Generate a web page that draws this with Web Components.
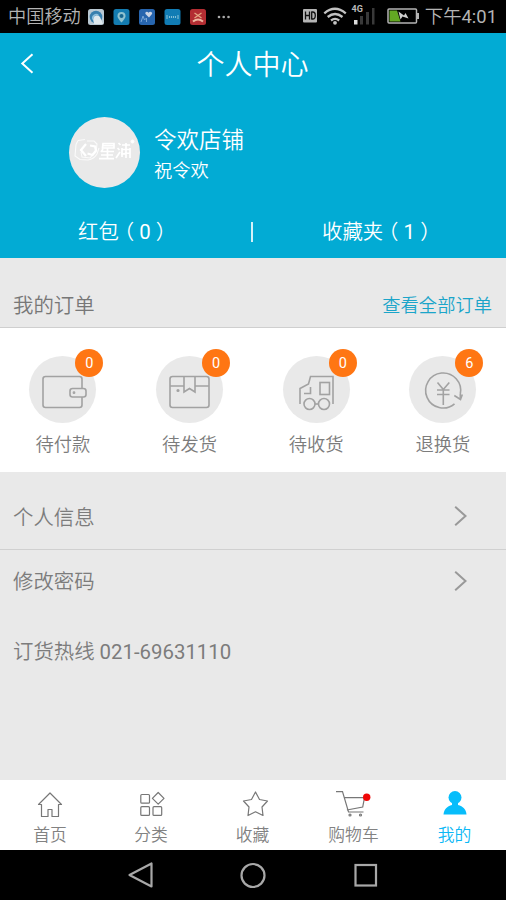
<!DOCTYPE html>
<html lang="zh-CN">
<head>
<meta charset="utf-8">
<title>个人中心</title>
<style>
html,body{margin:0;padding:0;background:#e9e9e9}
body{font-family:Roboto,"Noto Sans CJK SC",sans-serif;font-weight:350;width:506px;height:900px;overflow:hidden}
</style>
</head>
<body>
<profile-page></profile-page>
<script>
function define(name, html) {
  const t = document.createElement('template');
  t.innerHTML = '<style>*{box-sizing:border-box}svg{display:block;overflow:visible}.num{font-weight:400}</style>' + html;
  customElements.define(name, class extends HTMLElement {
    constructor() {
      super();
      this.attachShadow({mode: 'open'}).appendChild(t.content.cloneNode(true));
    }
  });
}

define('status-bar', `
<style>
:host{display:flex;align-items:center;justify-content:space-between;height:33px;padding:0 9px 0 8px;background:#000;color:#b4b4b4;font-size:18.2px;line-height:34px;white-space:nowrap}
.l,.r{display:flex;align-items:center;height:33px}
.l svg{margin-left:7px}
.t{font-size:18.400px}
</style>
<div class="l"><span>中国移动</span>
<svg width="144" height="16" viewBox="0 0 144 16">
 <rect width="16" height="16" rx="2.5" fill="#b9c8d2"/><circle cx="8" cy="8" r="6.3" fill="#377fae"/><path d="M5 10a3.8 3.8 0 0 1 7-2l3 7H6z" fill="#dfe8ec"/><path d="M5 10.500a3.500 3.500 0 0 1 5.500-4" stroke="#8fc0de" stroke-width="1.500" fill="none"/>
 <rect x="25.500" width="16" height="16" rx="2.500" fill="#147cb0"/><path d="M33.500 13.500C30 9.500 29.500 8.300 29.500 7a4 4 0 0 1 8 0c0 1.300-.5 2.500-4 6.500z" fill="#8fc3d0"/><circle cx="33.500" cy="7" r="2" fill="#17678f"/>
 <rect x="51" width="16" height="16" rx="2.500" fill="#2765ae"/><path d="M61 8.500L57.500 5c-1-2 1.800-3.200 3-1.300C61.800 1.800 65 3 64 5z" fill="#cbd4e5"/><path d="M53 13l2-6 1.500 4 2-2v4" stroke="#7aa6d6" fill="none"/>
 <rect x="76.500" width="16" height="16" rx="2.500" fill="#117cb4"/><path d="M79 6v4m2.500-3v2m2-2v2m2-2v2m2-2v2m2.500-3v4" stroke="#83bfd6" stroke-width="1.100"/>
 <rect x="102" width="16" height="16" rx="2.500" fill="#b32d32"/><path d="M106.500 4l7 5m0-5l-7 5" stroke="#e3a884" stroke-width="1.300"/><path d="M105 12.500q5-4 10 0" stroke="#efb6a0" stroke-width="2" fill="none"/>
 <g fill="#aaa"><circle cx="131" cy="8" r="1.300"/><circle cx="135.700" cy="8" r="1.300"/><circle cx="140.500" cy="8" r="1.300"/></g>
</svg></div>
<div class="r">
<svg width="122" height="33" viewBox="303 0 122 33">
 <rect x="303" y="9" width="14" height="13.500" rx="1" fill="#b4b4b4"/>
 <path d="M305.500 11.500v8M309.500 11.500v8M305.500 15.500h4M311.700 12v7M311.200 12h1.500q2.600 0 2.600 3.500t-2.600 3.500h-1.500" stroke="#111" stroke-width="1.300" fill="none"/>
 <g fill="none" stroke="#c2c2c2" stroke-width="2.300"><path d="M324.300 13.300q10.500-9 21.500 0"/><path d="M327.700 17q7.300-6 14.800 0"/><path d="M331 20.500q4-3.300 8.200 0"/></g><circle cx="335" cy="22.800" r="1.900" fill="#c2c2c2"/>
 <rect x="354" y="20" width="3.500" height="4.500" fill="#ddd"/><g fill="#393939"><rect x="360" y="16" width="3" height="8.500"/><rect x="366" y="12" width="3" height="12.500"/><rect x="372" y="8" width="2.500" height="16.500"/></g>
 <text x="351.500" y="11.500" font-size="9" font-weight="700" fill="#bbb">4G</text>
 <rect x="388" y="9" width="28.500" height="14" rx="1" stroke="#b4b4b4" stroke-width="1.500" fill="none"/><path d="M418 13v6" stroke="#b4b4b4" stroke-width="2"/>
 <path d="M389.500 10.500h7.500l3.500 11h-11z" fill="#63a823"/><path d="M398.500 11.500l5.500 4 1.500-2.500 3 5.500-6-2-2 3z" fill="#d0d0d0"/>
</svg><span class="t">下午<span class="num">4:01</span></span></div>`);

define('profile-header', `
<style>
:host{display:flex;flex-direction:column;height:225px;background:#02abd4;color:#fff}
.bar{display:grid;grid-template-columns:60px 1fr 60px;align-items:center;height:62px}
.bar svg{margin-left:21px}
.bar span{text-align:center;font-size:28px;line-height:40px;padding:3px 1px 0 0}
.who{display:flex;gap:14px;padding:22px 0 0 69px;height:114px}
.av{width:71px;height:71px;border-radius:50%;background:#e9e9e9}
.n{padding-top:7px}
.n b{display:block;font-weight:inherit;font-size:22.500px;line-height:32px}
.n i{display:block;font-style:normal;font-size:18.300px;line-height:30px}
.st{display:grid;grid-template-columns:251px 2px 1fr;height:46px;align-items:center;font-size:20.400px;line-height:30px}
.st u{width:1.500px;height:20px;background:#d4f1f8}
.a{padding-left:78px}.b{padding-left:69px}
.par{font-feature-settings:"halt";margin:0 5.100px}
</style>
<div class="bar"><svg width="13" height="20" viewBox="0 0 13 20"><path d="M11.500 .3L1.300 9.500l10.200 9.200" stroke="#fff" stroke-width="2" fill="none"/></svg><span>个人中心</span></div>
<div class="who"><div class="av"><svg width="71" height="71" viewBox="0 0 71 71" fill="none" stroke="#fff">
<path d="M9 23.500l7-1M7 27.500l-1 11.500 5 3.500 8 .5q6-1 9-6l2-6M9 23.500l-2 4M18 24l7 0 3 3-1 8-6 6-8-1-1-5" stroke-width="1.100" opacity=".8"/><path d="M17 27l-5 6 5 6M21 28.500l5 1 1 4-3.500 4.500-5-1.500" stroke-width="2.200"/>
<g stroke-width="1.700"><path d="M34 26.500h11v4.500H33.500zM34 28.700h11M32 34.500h13M32 38h12M30 41.700h15M38.500 31v11M34 32l-2 3"/><path d="M49.500 26l2 2M48.500 31l2 2M47 41l4-6M53 28h8M53 32.500h8M57 26v15M52 37l9-1M61 31v10M53 31v9"/></g><circle cx="63.500" cy="24.500" r="1.500" fill="#fff"/></svg></div>
<div class="n"><b>令欢店铺</b><i>祝令欢</i></div></div>
<div class="st"><span class="a">红包<span class="par">（</span><span class="num">0</span><span class="par">）</span></span><u></u><span class="b">收藏夹<span class="par">（</span><span class="num">1</span><span class="par">）</span></span></div>`);

define('section-head', `
<style>
:host{display:flex;justify-content:space-between;align-items:center;height:70px;padding:26px 14px 0 13px;border-bottom:1px solid #cfcfcf;color:#777;font-size:20.400px;line-height:30px}
::slotted(a){color:#1ba5c9;font-size:18.300px}
</style><slot></slot><slot name="link"></slot>`);

define('order-item', `
<style>
:host{display:flex;flex-direction:column;align-items:center;padding-top:28px;color:#7c7c7c;font-size:18.300px;line-height:28px}
.c{position:relative;width:67px;height:67px;border-radius:50%;background:#e9e9e9;margin-bottom:8px}
.badge{position:absolute;left:46px;top:-7px;width:28px;height:28px;border-radius:50%;background:#ff7613;color:#fff;text-align:center;font-size:14.500px;line-height:29px;font-weight:400}
::slotted(svg){display:block;width:67px;height:67px;fill:none;stroke:#a2a2a2;stroke-width:1.600}
</style><div class="c"><slot name="icon"></slot><div class="badge"><slot name="count"></slot></div></div><slot></slot>`);

define('order-grid', `<style>:host{display:grid;grid-template-columns:repeat(4,126.700px);height:144px;background:#fff}::slotted(*){margin-left:-1px}</style><slot></slot>`);

define('menu-row', `
<style>
:host{display:flex;align-items:center;justify-content:space-between;height:64px;padding:0 39px 0 13px;color:#7c7c7c;font-size:20.400px;line-height:30px}
:host([first]){height:78px;padding-top:14px;border-bottom:1px solid #d0d0d0}
:host([plain]) svg{display:none}
:host([plain]){height:76px}
svg{margin-bottom:3px}
</style><span><slot></slot></span><svg width="13" height="20" viewBox="0 0 13 20"><path d="M1.200 .8L11.500 10 1.200 19.200" stroke="#999" stroke-width="2" fill="none"/></svg>`);

define('tab-item', `
<style>
:host{display:flex;flex-direction:column;align-items:center;padding-top:9px;font-size:16.800px;line-height:26px;color:#828282}
:host([active]){color:#0cb8f5}
::slotted(svg){display:block;width:40px;height:33px;fill:none;stroke:#777;stroke-width:1.200;overflow:visible}
</style><slot name="icon"></slot><slot></slot>`);
define('tab-bar', `<style>:host{display:grid;grid-template-columns:100px 102px 101px 101px 101px;height:70px;background:#fff;margin-top:auto}</style><slot></slot>`);

define('system-nav', `
<style>:host{display:flex;justify-content:center;align-items:center;gap:87px;height:50px;background:#000;padding-right:1px}svg{fill:none;stroke:#a8a8a8;stroke-width:2.200}</style>
<svg width="26" height="28" viewBox="0 0 26 28"><path d="M24.500 2.500v23L2.500 14z" stroke-linejoin="round"/></svg>
<svg width="26" height="28" viewBox="0 0 26 28"><circle cx="13" cy="14.500" r="11.500"/></svg>
<svg width="26" height="28" viewBox="0 0 26 28"><rect x="2.500" y="4" width="20.500" height="20.500"/></svg>`);

define('profile-page', `
<style>:host{display:flex;flex-direction:column;width:506px;height:900px;background:#e9e9e9}a{text-decoration:none}</style>
<status-bar></status-bar>
<profile-header></profile-header>
<section-head>我的订单<a slot="link">查看全部订单</a></section-head>
<order-grid>
<order-item><svg slot="icon" viewBox="0 0 67 67"><path d="M53 32V23q0-2.500-2.500-2.500h-34Q14 20.500 14 23v26q0 2.500 2.500 2.500h34Q53 51.500 53 49v-8"/><rect x="41" y="32.500" width="16" height="8.500" rx="2.500"/><circle cx="45" cy="36.700" r=".6"/></svg><span slot="count">0</span>待付款</order-item>
<order-item><svg slot="icon" viewBox="0 0 67 67"><rect x="14" y="20.500" width="39" height="31" rx="2.500"/><path d="M14 30h14M39 30h14M28 20.500V36l5.500-3.500L39 36V20.500"/><circle cx="22" cy="34.500" r=".8"/></svg><span slot="count">0</span>待发货</order-item>
<order-item><svg slot="icon" viewBox="0 0 67 67"><path d="M17 48V32.500l8.500-4.500 2-7.500H50V48M21 37.500h6.500V31"/><rect x="37" y="26.500" width="9.500" height="12"/><circle cx="26.500" cy="48" r="5.500"/><circle cx="41" cy="48" r="5.500"/><path d="M32 48h3.500"/></svg><span slot="count">0</span>待收货</order-item>
<order-item><svg slot="icon" viewBox="0 0 67 67"><path d="M45.500 47.800A17.500 17.500 0 1 1 51.300 38M45.300 39.500l6.200 4 1.800-5M51.300 38v5.500"/><path d="M28.500 26.500l5.800 7 6-7M28 34h12.500M28 38.500h12.500M34.300 33.500V49"/></svg><span slot="count">6</span>退换货</order-item>
</order-grid>
<menu-row first>个人信息</menu-row>
<menu-row>修改密码</menu-row>
<menu-row plain>订货热线 <span class="num">021-69631110</span></menu-row>
<tab-bar>
<tab-item><svg slot="icon" viewBox="0 0 40 33"><path d="M11.500 15.500H8.500L20 4l11.500 11.500h-3V27.500h-6.500v-7h-4v7h-6.500z" stroke-linejoin="round"/></svg>首页</tab-item>
<tab-item><svg slot="icon" viewBox="0 0 40 33"><rect x="9.800" y="5.500" width="8.700" height="8.700" rx="1"/><rect x="9.800" y="17.700" width="8.700" height="8.700" rx="1"/><rect x="22" y="17.700" width="8.700" height="8.700" rx="1"/><path d="M27.200 3.500l5.800 5.800-5.800 5.800-5.800-5.800z" stroke-linejoin="round"/></svg>分类</tab-item>
<tab-item><svg slot="icon" viewBox="0 0 40 33"><path d="M22.500 3l4 7.500 8 1.500-5.500 6 1 8.500-7.500-3.700-7.500 3.700 1-8.500-5.500-6 8-1.500z" stroke-linejoin="round"/></svg>收藏</tab-item>
<tab-item><svg slot="icon" viewBox="0 0 40 33"><path d="M2 2.700h6.500L14.500 23h15M9.900 8.700h20.600l-1.800 9.300-15.800 3"/><circle cx="16" cy="26" r="1"/><circle cx="26.500" cy="26" r="1"/><circle cx="32.700" cy="8.300" r="3.700" fill="#f00707" stroke="none"/></svg>购物车</tab-item>
<tab-item active><svg slot="icon" viewBox="0 0 40 33"><g fill="#07bdfb" stroke="none"><circle cx="20" cy="8.500" r="6.500"/><path d="M8.500 25.500c.5-5.500 3.500-8 8.500-9.500h6c5 1.500 8 4 8.500 9.500z"/><path d="M17 12h6v6h-6z"/></g></svg>我的</tab-item>
</tab-bar>
<system-nav></system-nav>`);
</script>
</body>
</html>
